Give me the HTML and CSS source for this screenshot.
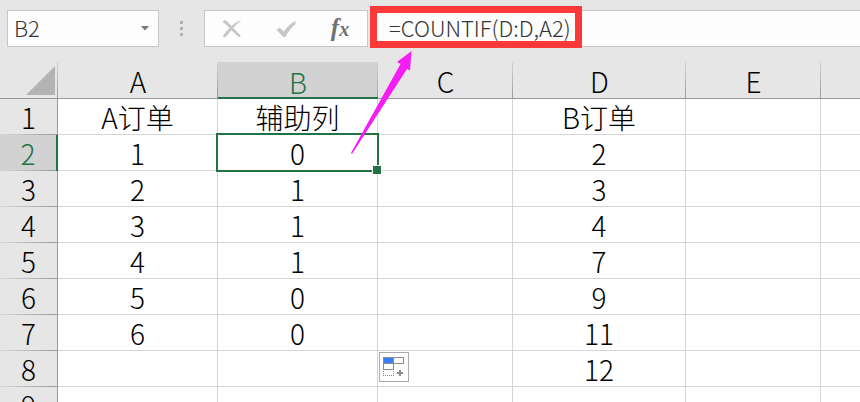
FILE: index.html
```html
<!DOCTYPE html>
<html lang="zh-CN">

<head>
  <meta charset="UTF-8">
  <meta name="viewport" content="width=device-width, initial-scale=1.0">
  <title>COUNTIF</title>
  <link rel="stylesheet" href="styles.css">
</head>

<body>
  <div class="toolbar">
    <div class="name-box">
      <input class="name-input" type="text" value="B2" aria-label="名称框">
      <button class="name-toggle" type="button" aria-label="展开">
        <svg width="8" height="5" viewBox="0 0 8 5"><path d="M0 0h8L4 4.5z" fill="#777"/></svg>
      </button>
    </div>
    <div class="grip"><i></i><i></i><i></i></div>
    <div class="actions">
      <button type="button" aria-label="取消">
        <svg width="20" height="20" viewBox="0 0 20 20">
          <path d="M1 3C1.500 1 4 1 6 3.500L9.500 7.500C12 4.500 15 2.500 18.500 2C15.500 4 13 6.500 11 9.200L18.500 16.500L17 18L9.500 11C7 13.500 5 16 3.500 18C2 18.500 1 17.500 1.500 16.500C3.500 13.500 5.500 11.200 7.800 9.200C6 7.200 4 5 1 3z" fill="#c6c6c6" stroke="#c6c6c6" stroke-width=".5"/>
        </svg>
      </button>
      <button type="button" aria-label="输入">
        <svg width="20" height="20" viewBox="0 0 20 20">
          <path d="M.500 11L3.500 8.500L8 12.500C11 8 15 4 19.500 2V5C15.500 8.500 12 13 9.500 18H7.500z" fill="#c6c6c6"/>
        </svg>
      </button>
      <button class="fx" type="button" aria-label="插入函数">f<span>x</span></button>
    </div>
    <div class="formula">
      <input class="formula-input" type="text" value="=COUNTIF(D:D,A2)" aria-label="编辑栏">
      <div class="highlight"></div>
    </div>
  </div>

  <div class="sheet">
    <table class="grid">
      <colgroup>
        <col class="col-head">
        <col class="col-a">
        <col class="col-b">
        <col class="col-c">
        <col class="col-d">
        <col class="col-e">
        <col>
      </colgroup>
      <thead>
        <tr>
          <th class="corner"><svg width="29" height="29" viewBox="0 0 29 29"><path d="M29 0v29H0z" fill="#b3b3b3"/></svg></th>
          <th>A</th>
          <th class="active">B</th>
          <th>C</th>
          <th>D</th>
          <th>E</th>
          <th></th>
        </tr>
      </thead>
      <tbody>
        <tr><th>1</th><td>A订单</td><td>辅助列</td><td></td><td>B订单</td><td></td><td></td></tr>
        <tr><th class="active">2</th><td>1</td><td class="selected">0<span class="selection"></span></td><td></td><td>2</td><td></td><td></td></tr>
        <tr><th>3</th><td>2</td><td>1</td><td></td><td>3</td><td></td><td></td></tr>
        <tr><th>4</th><td>3</td><td>1</td><td></td><td>4</td><td></td><td></td></tr>
        <tr><th>5</th><td>4</td><td>1</td><td></td><td>7</td><td></td><td></td></tr>
        <tr><th>6</th><td>5</td><td>0</td><td></td><td>9</td><td></td><td></td></tr>
        <tr><th>7</th><td>6</td><td>0</td><td></td><td>11</td><td></td><td></td></tr>
        <tr>
          <th>8</th><td></td><td></td>
          <td class="fill-cell">
            <button class="fill-options" type="button" aria-label="自动填充选项">
              <svg width="28" height="28" viewBox="0 0 28 28" shape-rendering="crispEdges">
                <path d="M3 4h21v7H14v6H3z" fill="#8c8c8c"/>
                <path d="M4 5h9v5H4z" fill="#3b7dfc"/>
                <path d="M14 5h9v5h-9zM4 11h9v5H4z" fill="#fff"/>
                <path d="M3 22.500h11M3.500 18v4M13.500 18v4" fill="none" stroke="#8c8c8c" stroke-dasharray="1 1"/>
                <path d="M19 17h2v2h2v2h-2v2h-2v-2h-2v-2h2z" fill="#8c8c8c"/>
              </svg>
            </button>
          </td>
          <td>12</td><td></td><td></td>
        </tr>
        <tr><th>9</th><td></td><td></td><td></td><td></td><td></td><td></td></tr>
      </tbody>
    </table>
  </div>

  <svg class="pointer" width="62" height="104" viewBox="0 0 62 104">
    <path d="M61.500 0L47 11L50.500 13L1 102L2 103L57 18L60 19.500z" fill="#f51df5"/>
  </svg>
</body>

</html>
```

FILE: styles.css
```css
* {
  box-sizing: border-box;
}

body {
  display: flex;
  flex-direction: column;
  position: relative;
  margin: 0;
  height: 100vh;
  overflow: hidden;
  background: #e6e6e6;
  color: #000;
  font-family: "Noto Sans CJK SC", "Noto Sans", sans-serif;
  font-weight: 300;
}

button,
input {
  margin: 0;
  padding: 0;
  border: 0;
  background: none;
  color: #333;
  font: inherit;
}

svg {
  display: block;
}

.toolbar {
  display: flex;
  flex: none;
  padding: 10px 0 15px 7px;
  height: 62px;
  font-size: 22px;
}

.name-box,
.actions,
.formula {
  display: flex;
  align-items: center;
  border: 1px solid #c6c6c6;
  background: #fdfdfd;
}

.name-box {
  width: 152px;
}

.name-input,
.formula-input {
  flex: 1;
  min-width: 0;
  padding-bottom: 4px;
}

.name-input {
  padding-left: 6px;
}

.name-toggle {
  padding: 0 9px;
}

.grip {
  display: flex;
  flex-direction: column;
  align-items: center;
  justify-content: center;
  gap: 3px;
  width: 45px;
}

.grip i {
  width: 3px;
  height: 3px;
  background: #b1b1b1;
}

.actions {
  width: 164px;
}

.actions button {
  display: flex;
  flex: 1;
  justify-content: center;
}

.actions .fx {
  align-items: baseline;
  color: #707070;
  font: italic bold 25px/32px "Liberation Serif", serif;
}

.fx span {
  font-size: 20px;
}

.formula {
  flex: 1;
  position: relative;
  margin-left: 3px;
  border-right: 0;
}

.formula-input {
  padding-left: 17px;
}

.highlight {
  position: absolute;
  top: -5px;
  left: -2px;
  width: 212px;
  height: 42px;
  border: 7px solid #fc3838;
}

.sheet {
  flex: 1;
  min-height: 0;
  overflow: hidden;
}

.grid {
  width: 100%;
  border-spacing: 0;
  table-layout: fixed;
  background: #fff;
  font-size: 28px;
  line-height: 34px;
  text-align: center;
}

.col-head {
  width: 58px;
}

.col-a,
.col-b {
  width: 160px;
}

.col-c,
.col-e {
  width: 135px;
}

.col-d {
  width: 173px;
}

.grid th,
.grid td {
  padding: 0;
  height: 36px;
  font-weight: 300;
}

.grid td {
  border-right: 1px solid #d4d4d4;
  border-bottom: 1px solid #d4d4d4;
}

.grid td:last-child {
  border-right: 0;
}

.grid thead th {
  height: 37px;
  padding-top: 2px;
  border-bottom: 1px solid #999;
  background: linear-gradient(#d4d4d4, #999) right / 1px 100% no-repeat #e6e6e6;
}

.grid thead th:last-child {
  background: #e6e6e6;
}

.grid tbody th {
  padding-bottom: 1px;
  border-right: 1px solid #999;
  background: linear-gradient(to right, #d8d8d8, #999) bottom / 100% 1px no-repeat #e6e6e6;
}

.grid thead .active {
  border-bottom: 0;
  background-color: #d2d2d2;
  box-shadow: inset 0 -2px #217346;
  color: #217346;
}

.grid tbody .active {
  border-right: 2px solid #217346;
  background-color: #d2d2d2;
  color: #217346;
}

.grid .corner {
  padding-top: 0;
}

.corner svg {
  margin: 3px 3px 3px auto;
}

.selected,
.fill-cell {
  position: relative;
}

.selection {
  position: absolute;
  top: -2px;
  right: -2px;
  bottom: -2px;
  left: -2px;
  border: 2px solid #217346;
}

.selection::after {
  content: "";
  position: absolute;
  right: -5px;
  bottom: -5px;
  width: 8px;
  height: 8px;
  border: 1px solid #fff;
  background: #217346;
}

.fill-options {
  position: absolute;
  top: 1px;
  left: 1px;
  border: 1px solid #ababab;
  background: #fff;
}

.pointer {
  position: absolute;
  top: 51px;
  left: 350px;
}
```
